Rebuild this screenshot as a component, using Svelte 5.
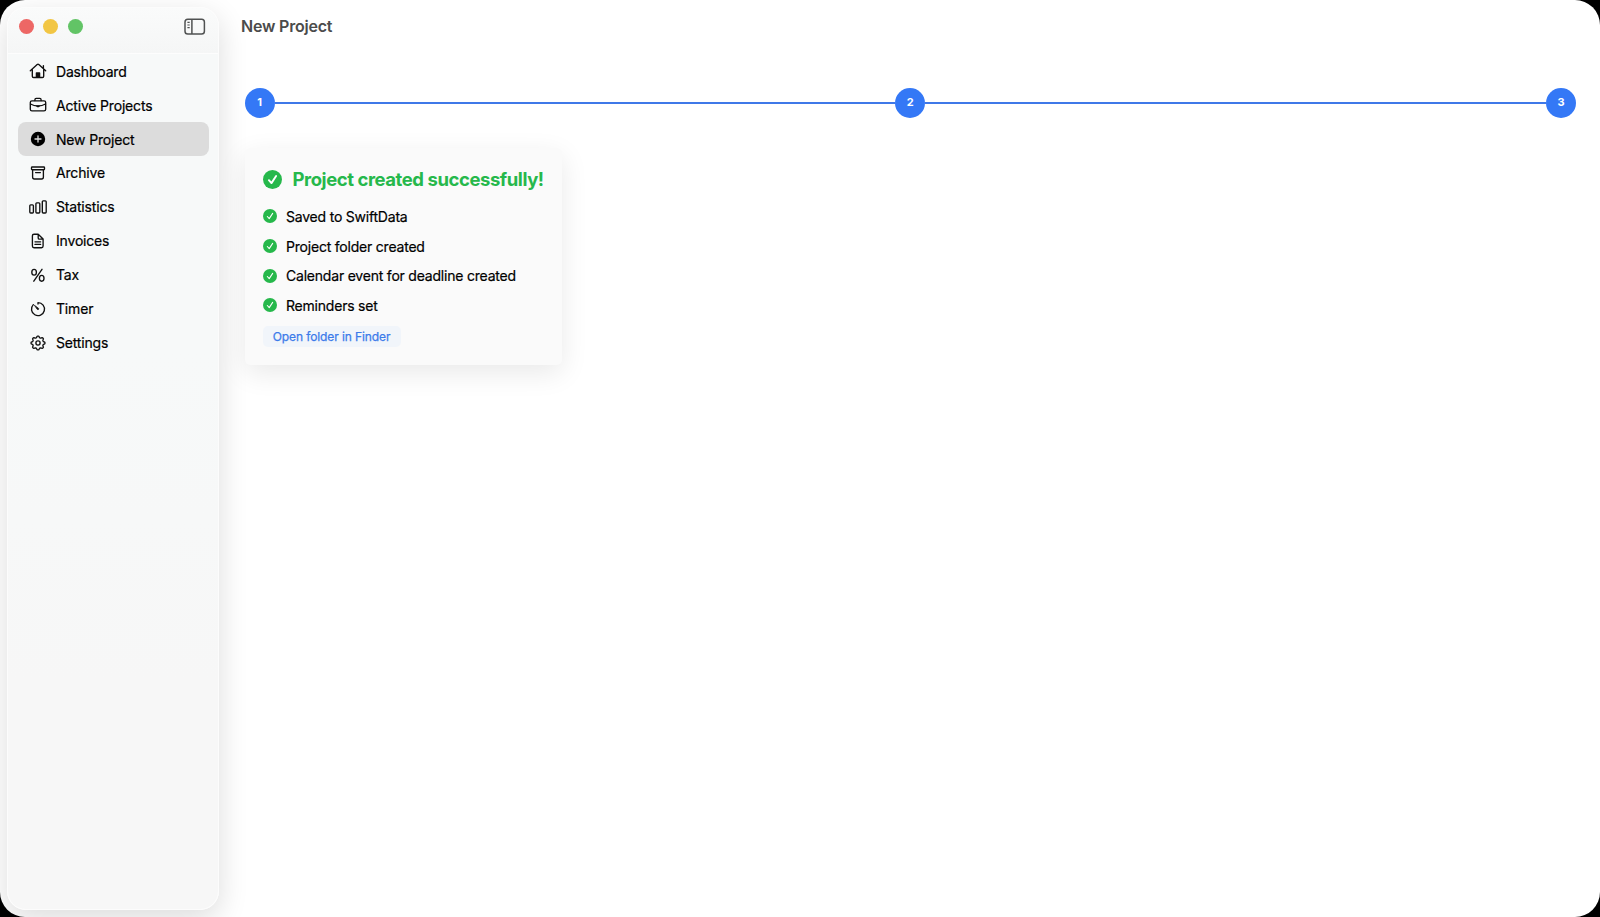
<script>
  const nav = [
    { id: 'home', label: 'Dashboard' },
    { id: 'case', label: 'Active Projects' },
    { id: 'plus', label: 'New Project' },
    { id: 'archive', label: 'Archive' },
    { id: 'stats', label: 'Statistics' },
    { id: 'doc', label: 'Invoices' },
    { id: 'percent', label: 'Tax' },
    { id: 'timer', label: 'Timer' },
    { id: 'gear', label: 'Settings' }
  ];
  const selected = 'plus';
  const done = [
    'Saved to SwiftData',
    'Project folder created',
    'Calendar event for deadline created',
    'Reminders set'
  ];

  // Eight-lobed outline for the settings gear.
  let gear = '';
  for (let i = 0; i <= 96; i++) {
    const a = (i / 96) * Math.PI * 2;
    const r = 6.2 + 0.75 * Math.tanh(2.2 * Math.cos(8 * a));
    gear += `${i ? 'L' : 'M'}${(9 + r * Math.sin(a)).toFixed(2)} ${(9 - r * Math.cos(a)).toFixed(2)}`;
  }
  gear += 'Z';
</script>

<div class="window">
  <aside class="sidebar">
    <header class="bar">
      <div class="lights"><i class="red"></i><i class="yellow"></i><i class="green"></i></div>
      <svg class="toggle" width="22" height="18" viewBox="0 0 22 18" fill="none" stroke="#505252" stroke-width="1.5">
        <rect x="1" y="1.2" width="19.4" height="14.8" rx="2.8" />
        <path d="M7.9 1.2V16" />
        <path d="M3.4 4.4h2.3M3.4 7h2.3M3.4 9.6h2.3" stroke-width="1.1" />
      </svg>
    </header>
    <nav>
      {#each nav as item}
        <div class="item" class:selected={item.id === selected}>
          <svg width="18" height="18" viewBox="0 0 18 18" fill="none" stroke="#111" stroke-width="1.35" stroke-linecap="round" stroke-linejoin="round">
            {#if item.id === 'home'}
              <path d="M1.3 8.8 8.2 2.6a1.2 1.2 0 0 1 1.6 0L16.7 8.8M3.3 7.5v6.7c0 .8.5 1.3 1.3 1.3h8.8c.8 0 1.3-.5 1.3-1.3V7.5M14.4 3.6v2.6" />
              <path d="M7.4 15.2v-4.3h3.2v4.3z" fill="#111" />
            {:else if item.id === 'case'}
              <rect x="1.3" y="4.9" width="15.4" height="10" rx="1.7" />
              <path d="M5.9 4.6V3.7c0-.8.5-1.3 1.3-1.3h3.6c.8 0 1.3.5 1.3 1.3v.9M1.5 8c2.2 1.3 4.8 2 7.5 2s5.3-.7 7.5-2" />
              <path d="M7.4 9.5h3.2v.8a1 1 0 0 1-1 1H8.4a1 1 0 0 1-1-1z" fill="#111" stroke="none" />
            {:else if item.id === 'plus'}
              <circle cx="9" cy="9" r="7.2" fill="#000" stroke="none" />
              <path d="M9 6v6M6 9h6" stroke="#dcdcdc" stroke-width="1.3" />
            {:else if item.id === 'archive'}
              <rect x="2.5" y="3" width="13" height="2.7" rx=".7" />
              <path d="M3.6 5.8v7.3c0 1.1.7 1.9 1.8 1.9h7.2c1.1 0 1.8-.8 1.8-1.9V5.8M6.6 8.6h4.8" />
            {:else if item.id === 'stats'}
              <rect x=".8" y="6.8" width="3.6" height="8.2" rx=".9" />
              <rect x="6.9" y="4.8" width="3.9" height="10.2" rx=".9" />
              <rect x="13.3" y="2.8" width="3.9" height="12.2" rx=".9" />
            {:else if item.id === 'doc'}
              <path d="M5 2.2h4.2l4.9 4.9v7c0 1-.6 1.6-1.6 1.6H5c-1 0-1.6-.6-1.6-1.6V3.8c0-1 .6-1.6 1.6-1.6zM9.2 2.4v3.5c0 .8.4 1.2 1.2 1.2H14M6 9.8h5.6M6 12.4h5.6" />
            {:else if item.id === 'percent'}
              <ellipse cx="5.1" cy="6.2" rx="2.3" ry="2.9" />
              <ellipse cx="12.7" cy="12.3" rx="2.3" ry="2.9" />
              <path d="M13 3.3 4.8 15.2" />
            {:else if item.id === 'timer'}
              <path d="M9 2.6a6.5 6.5 0 1 1-4.7 2M9 2.6v1.5" />
              <path d="M5.7 5.5 9.6 8.4a.8.8 0 0 1-1.1 1.1z" fill="#111" stroke-width=".8" />
            {:else}
              <path d={gear} />
              <circle cx="9" cy="9" r="2.1" />
            {/if}
          </svg>
          <span>{item.label}</span>
        </div>
      {/each}
    </nav>
  </aside>

  <main>
    <h1>New Project</h1>
    <div class="steps">
      <b>1</b><hr /><b>2</b><hr /><b>3</b>
    </div>
    <section class="card">
      <h2>
        <svg width="19" height="19" viewBox="0 0 20 20"><circle cx="10" cy="10" r="10" fill="#26b84b" /><path d="m6.2 10.7 2.7 3.1 4.9-7.5" fill="none" stroke="#fff" stroke-width="2" stroke-linecap="round" stroke-linejoin="round" /></svg>
        <span>Project created successfully!</span>
      </h2>
      <ul>
        {#each done as line}
          <li>
            <svg width="14" height="14" viewBox="0 0 20 20"><circle cx="10" cy="10" r="10" fill="#26b84b" /><path d="m6.2 10.7 2.7 3.1 4.9-7.5" fill="none" stroke="#fff" stroke-width="1.5" stroke-linecap="round" stroke-linejoin="round" /></svg>
            <span>{line}</span>
          </li>
        {/each}
      </ul>
      <button>Open folder in Finder</button>
    </section>
  </main>
</div>

<style>
  :global(body) {
    margin: 0;
    background: #000;
  }
  .window {
    box-sizing: border-box;
    width: 1600px;
    height: 917px;
    padding: 7px;
    display: flex;
    overflow: hidden;
    border-radius: 25px;
    background: #fff;
    font-family: Inter, sans-serif;
    color: #111;
  }
  svg {
    flex: none;
  }
  .sidebar {
    box-sizing: border-box;
    width: 212px;
    height: 903px;
    flex: none;
    border-radius: 19px;
    border: 1px solid #fcfcfc;
    background: linear-gradient(#f7f9f9, #f7f9f9 38%, #f7f7f7 75%);
    box-shadow: 0 9px 30px rgba(0, 0, 0, 0.14);
  }
  .bar {
    box-sizing: border-box;
    height: 46px;
    padding: 0 12.5px 8px 11px;
    display: flex;
    align-items: center;
    justify-content: space-between;
    border-bottom: 1px solid #fdfdfd;
    border-radius: 18px 18px 0 0;
    background: linear-gradient(#fafbfb, #f5f6f6);
  }
  .lights {
    display: flex;
    gap: 9.3px;
  }
  .lights i {
    width: 15px;
    height: 15px;
    border-radius: 50%;
  }
  .red { background: #ed6765; }
  .yellow { background: #f2c644; }
  .green { background: #62c466; }
  nav {
    padding: 0 9.5px 0 10px;
  }
  .item {
    height: 33.93px;
    padding-left: 11px;
    display: flex;
    align-items: center;
    gap: 9px;
    border-radius: 8px;
    font-size: 14px;
    letter-spacing: -0.18px;
    color: #000;
    -webkit-text-stroke: 0.2px #000;
  }
  .item svg {
    margin-top: 0.6px;
  }
  .item span {
    padding-top: 0.4px;
  }
  .selected {
    background: #dcdcdc;
  }
  main {
    flex: 1;
    padding: 0 17px 0 22px;
  }
  h1 {
    margin: 0;
    height: 39px;
    line-height: 39px;
    font-size: 16px;
    font-weight: 600;
    letter-spacing: -0.2px;
    color: #4b4b4b;
  }
  .steps {
    margin: 41.7px 0 0 3.6px;
    display: flex;
    align-items: center;
  }
  .steps b {
    width: 30px;
    height: 30px;
    border-radius: 50%;
    background: #3478f6;
    color: #fff;
    font-size: 11px;
    line-height: 29.4px;
    text-align: center;
  }
  hr {
    flex: 1;
    height: 2px;
    margin: 0;
    border: 0;
    background: #3f78e8;
  }
  .card {
    box-sizing: border-box;
    width: 317px;
    height: 217px;
    margin: 30px 0 0 3.5px;
    padding: 20px 18px 0;
    border-radius: 5px;
    background: #fafafa;
    box-shadow: 0 8px 28px rgba(0, 0, 0, 0.09);
  }
  h2 {
    margin: 0;
    height: 24px;
    display: flex;
    align-items: center;
    gap: 11px;
    font-size: 18.5px;
    font-weight: 700;
    letter-spacing: -0.44px;
    color: #26b84b;
    white-space: nowrap;
  }
  h2 span {
    margin-top: -1.5px;
  }
  ul {
    margin: 10px 0 0;
    padding: 0;
    list-style: none;
  }
  li {
    height: 29.6px;
    display: flex;
    align-items: center;
    gap: 9.5px;
    font-size: 14px;
    letter-spacing: -0.21px;
    white-space: nowrap;
    color: #000;
    -webkit-text-stroke: 0.2px #000;
  }
  button {
    display: block;
    width: 138px;
    height: 21px;
    margin: 6px 0 0;
    padding: 0;
    border: 0;
    border-radius: 5px;
    background: #f1f5fa;
    font: 400 12px Inter, sans-serif;
    letter-spacing: -0.1px;
    color: #3c7bea;
    -webkit-text-stroke: 0.25px #3c7bea;
  }
</style>
